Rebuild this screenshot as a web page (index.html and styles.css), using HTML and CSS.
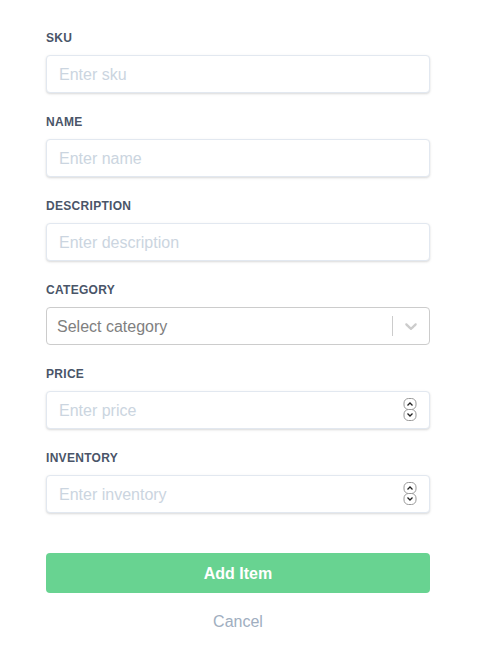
FILE: index.html
```html
<!DOCTYPE html>
<html>
<head>
<meta charset="utf-8">
<link rel="stylesheet" href="styles.css">
</head>
<body>
<form class="form">
  <div class="field">
    <label class="label">SKU</label>
    <input class="input" type="text" placeholder="Enter sku">
  </div>
  <div class="field">
    <label class="label">Name</label>
    <input class="input" type="text" placeholder="Enter name">
  </div>
  <div class="field">
    <label class="label">Description</label>
    <input class="input" type="text" placeholder="Enter description">
  </div>
  <div class="field">
    <label class="label">Category</label>
    <div class="select">
      <div class="select-value">Select category</div>
      <div class="select-indicators">
        <span class="select-sep"></span>
        <span class="select-arrow">
          <svg width="20" height="20" viewBox="0 0 20 20"><path fill="#cccccc" d="M4.516 7.548c0.436-0.446 1.043-0.481 1.576 0l3.908 3.747 3.908-3.747c0.533-0.481 1.141-0.446 1.574 0 0.436 0.445 0.408 1.197 0 1.615-0.406 0.418-4.695 4.502-4.695 4.502-0.217 0.223-0.502 0.335-0.787 0.335s-0.57-0.112-0.789-0.335c0 0-4.287-4.084-4.695-4.502s-0.436-1.170 0-1.615z"/></svg>
        </span>
      </div>
    </div>
  </div>
  <div class="field">
    <label class="label">Price</label>
    <div class="num">
      <input class="input" type="number" placeholder="Enter price">
      <svg class="spin" width="14" height="26" viewBox="0 0 14 26">
        <rect x="1" y="1.5" width="12" height="11" rx="4.5" fill="#fff" stroke="#9a9a9a" stroke-width="1"/>
        <rect x="1" y="12.5" width="12" height="11" rx="4.5" fill="#fff" stroke="#9a9a9a" stroke-width="1"/>
        <path d="M4.5 8.5 L7 6 L9.5 8.5" fill="none" stroke="#222" stroke-width="1.3"/>
        <path d="M4.5 16.5 L7 19 L9.5 16.5" fill="none" stroke="#222" stroke-width="1.3"/>
      </svg>
    </div>
  </div>
  <div class="field">
    <label class="label">Inventory</label>
    <div class="num">
      <input class="input" type="number" placeholder="Enter inventory">
      <svg class="spin" width="14" height="26" viewBox="0 0 14 26">
        <rect x="1" y="1.5" width="12" height="11" rx="4.5" fill="#fff" stroke="#9a9a9a" stroke-width="1"/>
        <rect x="1" y="12.5" width="12" height="11" rx="4.5" fill="#fff" stroke="#9a9a9a" stroke-width="1"/>
        <path d="M4.5 8.5 L7 6 L9.5 8.5" fill="none" stroke="#222" stroke-width="1.3"/>
        <path d="M4.5 16.5 L7 19 L9.5 16.5" fill="none" stroke="#222" stroke-width="1.3"/>
      </svg>
    </div>
  </div>
  <button class="btn" type="button">Add Item</button>
  <div class="cancel">Cancel</div>
</form>
</body>
</html>
```
FILE: styles.css
```css
html, body {
  margin: 0;
  padding: 0;
  background: #ffffff;
  font-family: "Liberation Sans", Arial, sans-serif;
}
.form {
  width: 384px;
  padding: 30px 0 0 46px;
}
.field {
  display: flex;
  flex-direction: column;
  margin-bottom: 21px;
}
.label {
  display: block;
  font-size: 12px;
  line-height: 16px;
  font-weight: 700;
  text-transform: uppercase;
  letter-spacing: 0.025em;
  color: #4a5568;
  margin-bottom: 9px;
}
.input {
  box-sizing: border-box;
  width: 100%;
  height: 38px;
  margin: 0;
  padding: 9px 12px 7px;
  font-family: inherit;
  font-size: 16px;
  line-height: 20px;
  color: #4a5568;
  border: 1px solid #e2e8f0;
  border-radius: 4px;
  box-shadow: 0 1px 3px 0 rgba(0,0,0,0.1), 0 1px 2px 0 rgba(0,0,0,0.06);
  outline: none;
  background: #fff;
  -moz-appearance: textfield;
}
.input::-webkit-inner-spin-button,
.input::-webkit-outer-spin-button {
  -webkit-appearance: none;
  margin: 0;
}
.input::placeholder {
  color: #cbd5e0;
  opacity: 1;
}
.num {
  position: relative;
}
.spin {
  position: absolute;
  right: 13px;
  top: 6px;
  display: block;
}
.select {
  box-sizing: border-box;
  height: 38px;
  border: 1px solid #cccccc;
  border-radius: 4px;
  display: flex;
  align-items: center;
  background: #fff;
}
.select-value {
  flex: 1;
  padding: 3px 8px 1px;
  margin-left: 2px;
  font-size: 16px;
  color: #808080;
}
.select-indicators {
  display: flex;
  align-items: stretch;
  align-self: stretch;
}
.select-sep {
  width: 1px;
  background: #cccccc;
  margin: 8px 0;
}
.select-arrow {
  display: flex;
  align-items: center;
  padding: 8px;
}
.select-arrow svg {
  display: block;
}
.btn {
  display: block;
  width: 100%;
  height: 40px;
  margin-top: 40px;
  padding: 2px 0 0;
  border: 0;
  border-radius: 4px;
  background: #68d391;
  color: #ffffff;
  font-family: inherit;
  font-size: 16px;
  font-weight: 700;
  cursor: pointer;
}
.cancel {
  text-align: center;
  margin-top: 19px;
  font-size: 16px;
  line-height: 20px;
  color: #a0aec0;
}
```
